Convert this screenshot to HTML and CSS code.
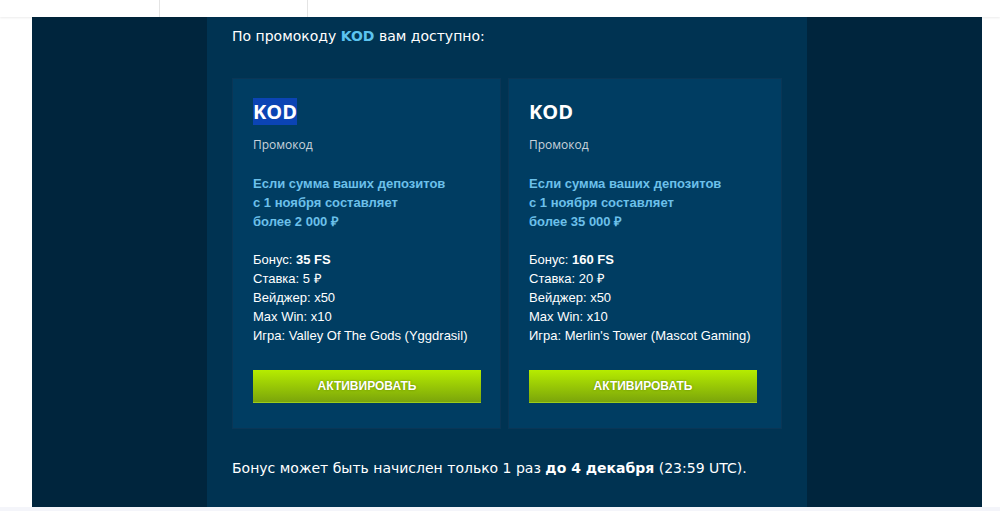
FILE: index.html
```
<!DOCTYPE html>
<html lang="ru">
<head>
    <meta charset="utf-8">
    <title>Промокод KOD</title>
    <link rel="stylesheet" href="styles.css">
</head>
<body>
<div class="topbar">
    <div class="tab"></div>
</div>
<div class="page">
    <div class="panel">
        <p class="intro">По промокоду <b class="code">KOD</b> вам доступно:</p>
        <div class="cards">
            <div class="card">
                <div class="card-title"><span class="selected">KOD</span></div>
                <div class="card-sub">Промокод</div>
                <div class="card-cond">Если сумма ваших депозитов<br>с 1 ноября составляет<br>более 2 000 ₽</div>
                <ul class="card-list">
                    <li>Бонус: <b>35 FS</b></li>
                    <li>Ставка: 5 ₽</li>
                    <li>Вейджер: x50</li>
                    <li>Max Win: x10</li>
                    <li>Игра: Valley Of The Gods (Yggdrasil)</li>
                </ul>
                <button class="btn">АКТИВИРОВАТЬ</button>
            </div>
            <div class="card">
                <div class="card-title">KOD</div>
                <div class="card-sub">Промокод</div>
                <div class="card-cond">Если сумма ваших депозитов<br>с 1 ноября составляет<br>более 35 000 ₽</div>
                <ul class="card-list">
                    <li>Бонус: <b>160 FS</b></li>
                    <li>Ставка: 20 ₽</li>
                    <li>Вейджер: x50</li>
                    <li>Max Win: x10</li>
                    <li>Игра: Merlin's Tower (Mascot Gaming)</li>
                </ul>
                <button class="btn">АКТИВИРОВАТЬ</button>
            </div>
        </div>
        <p class="outro">Бонус может быть начислен только 1 раз <b>до 4 декабря</b> (23:59 UTC).</p>
    </div>
</div>
<div class="bottom"></div>
</body>
</html>
```

FILE: styles.css
```
* {
    box-sizing: border-box;
}

body {
    margin: 0;
    background-color: #ffffff;
    font-family: "Liberation Sans", Arial, sans-serif;
}

.topbar {
    height: 17px;
    background-color: #ffffff;
    box-shadow: 0 1px 2px rgba(0, 0, 0, 0.08);
    position: relative;
    z-index: 1;
}

.tab {
    margin-left: 159px;
    width: 149px;
    height: 17px;
    border-left: 1px solid #e4e4e4;
    border-right: 1px solid #e4e4e4;
}

.page {
    margin: 0 18px 0 32px;
    background-color: #00253d;
}

.panel {
    width: 600px;
    margin: 0 auto;
    background-color: #003352;
    padding: 11px 25px 30px;
}

.intro,
.outro {
    margin: 0;
    font-family: "DejaVu Sans", Verdana, sans-serif;
    font-size: 14px;
    line-height: 17px;
    color: #ffffff;
}

.intro .code {
    color: #5cc3f0;
}

.outro {
    margin-top: 31px;
}

.cards {
    display: grid;
    grid-template-columns: 269px 1fr;
    gap: 7px;
    margin-top: 33px;
}

.card {
    background-color: #003d62;
    border: 1px solid #0a3656;
    padding: 20px 20px 25px;
}

.card-title {
    font-family: "Open Sans", sans-serif;
    font-weight: 700;
    font-size: 20px;
    line-height: 25px;
    color: #ffffff;
}

.selected {
    background-color: #0b44b4;
}

.card-sub {
    margin-top: 12px;
    font-family: "Open Sans", sans-serif;
    font-size: 12px;
    line-height: 18px;
    color: #c9d3dc;
}

.card-cond {
    margin-top: 20px;
    font-size: 13px;
    font-weight: 700;
    line-height: 19px;
    color: #6cc0ea;
}

.card-list {
    list-style: none;
    margin: 19px 0 0;
    padding: 0;
    font-size: 13px;
    line-height: 19px;
    color: #ffffff;
}

.btn {
    display: block;
    width: 228px;
    height: 33px;
    margin-top: 25px;
    border: 0;
    border-bottom: 1px solid #9ccc1a;
    background: linear-gradient(#b6ec00, #7ba50b);
    color: #ffffff;
    font-family: "Liberation Sans", Arial, sans-serif;
    font-size: 12px;
    font-weight: 700;
    text-shadow: 0 0 2px rgba(60, 80, 0, 0.6);
}

.bottom {
    height: 4px;
    background-color: #f4f5fa;
}
```
